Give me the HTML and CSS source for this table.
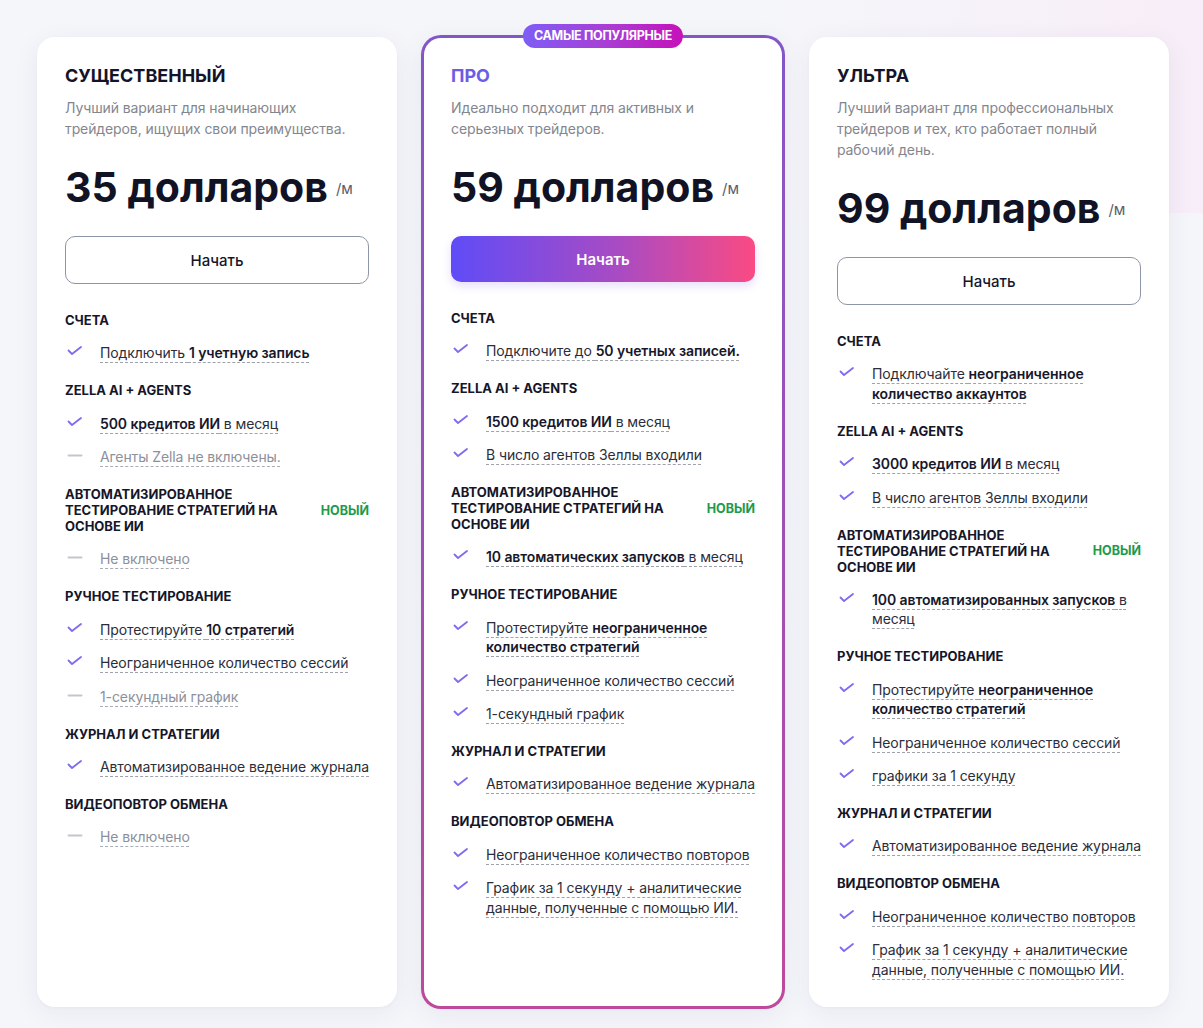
FILE: index.html
```html
<!DOCTYPE html>
<html lang="ru">
<head>
<meta charset="utf-8">
<title>Тарифы</title>
<link rel="stylesheet" href="styles.css">
</head>
<body>
<div class="pricing">

  <div class="card">
    <h3 class="plan">СУЩЕСТВЕННЫЙ</h3>
    <p class="desc">Лучший вариант для начинающих трейдеров, ищущих свои преимущества.</p>
    <div class="price"><span class="amount">35 долларов</span><span class="per">/м</span></div>
    <a class="btn btn-outline" href="#">Начать</a>
    <div class="features">
      <div class="section">
        <div class="sec-head"><span class="sec-title">СЧЕТА</span></div>
        <ul class="items">
          <li class="yes"><span class="ic"><svg viewBox="0 0 16 16"><path d="M1.5 6.5 5 10 14 3"/></svg></span><span class="txt">Подключить <b>1 учетную запись</b></span></li>
        </ul>
      </div>
      <div class="section">
        <div class="sec-head"><span class="sec-title">ZELLA AI + AGENTS</span></div>
        <ul class="items">
          <li class="yes"><span class="ic"><svg viewBox="0 0 16 16"><path d="M1.5 6.5 5 10 14 3"/></svg></span><span class="txt"><b>500 кредитов ИИ</b> в месяц</span></li>
          <li class="no"><span class="ic"><svg viewBox="0 0 16 16"><path d="M1.5 7.5H14.5"/></svg></span><span class="txt">Агенты Zella не включены.</span></li>
        </ul>
      </div>
      <div class="section">
        <div class="sec-head"><span class="sec-title wrap">АВТОМАТИЗИРОВАННОЕ ТЕСТИРОВАНИЕ СТРАТЕГИЙ НА ОСНОВЕ ИИ</span><span class="new">НОВЫЙ</span></div>
        <ul class="items">
          <li class="no"><span class="ic"><svg viewBox="0 0 16 16"><path d="M1.5 7.5H14.5"/></svg></span><span class="txt">Не включено</span></li>
        </ul>
      </div>
      <div class="section">
        <div class="sec-head"><span class="sec-title">РУЧНОЕ ТЕСТИРОВАНИЕ</span></div>
        <ul class="items">
          <li class="yes"><span class="ic"><svg viewBox="0 0 16 16"><path d="M1.5 6.5 5 10 14 3"/></svg></span><span class="txt">Протестируйте <b>10 стратегий</b></span></li>
          <li class="yes"><span class="ic"><svg viewBox="0 0 16 16"><path d="M1.5 6.5 5 10 14 3"/></svg></span><span class="txt">Неограниченное количество сессий</span></li>
          <li class="no"><span class="ic"><svg viewBox="0 0 16 16"><path d="M1.5 7.5H14.5"/></svg></span><span class="txt">1-секундный график</span></li>
        </ul>
      </div>
      <div class="section">
        <div class="sec-head"><span class="sec-title">ЖУРНАЛ И СТРАТЕГИИ</span></div>
        <ul class="items">
          <li class="yes"><span class="ic"><svg viewBox="0 0 16 16"><path d="M1.5 6.5 5 10 14 3"/></svg></span><span class="txt">Автоматизированное ведение журнала</span></li>
        </ul>
      </div>
      <div class="section">
        <div class="sec-head"><span class="sec-title">ВИДЕОПОВТОР ОБМЕНА</span></div>
        <ul class="items">
          <li class="no"><span class="ic"><svg viewBox="0 0 16 16"><path d="M1.5 7.5H14.5"/></svg></span><span class="txt">Не включено</span></li>
        </ul>
      </div>
    </div>
  </div>

  <div class="card card-pro">
    <span class="badge">САМЫЕ ПОПУЛЯРНЫЕ</span>
    <h3 class="plan plan-pro">ПРО</h3>
    <p class="desc">Идеально подходит для активных и серьезных трейдеров.</p>
    <div class="price"><span class="amount">59 долларов</span><span class="per">/м</span></div>
    <a class="btn btn-grad" href="#">Начать</a>
    <div class="features">
      <div class="section">
        <div class="sec-head"><span class="sec-title">СЧЕТА</span></div>
        <ul class="items">
          <li class="yes"><span class="ic"><svg viewBox="0 0 16 16"><path d="M1.5 6.5 5 10 14 3"/></svg></span><span class="txt">Подключите до <b>50 учетных записей.</b></span></li>
        </ul>
      </div>
      <div class="section">
        <div class="sec-head"><span class="sec-title">ZELLA AI + AGENTS</span></div>
        <ul class="items">
          <li class="yes"><span class="ic"><svg viewBox="0 0 16 16"><path d="M1.5 6.5 5 10 14 3"/></svg></span><span class="txt"><b>1500 кредитов ИИ</b> в месяц</span></li>
          <li class="yes"><span class="ic"><svg viewBox="0 0 16 16"><path d="M1.5 6.5 5 10 14 3"/></svg></span><span class="txt">В число агентов Зеллы входили</span></li>
        </ul>
      </div>
      <div class="section">
        <div class="sec-head"><span class="sec-title wrap">АВТОМАТИЗИРОВАННОЕ ТЕСТИРОВАНИЕ СТРАТЕГИЙ НА ОСНОВЕ ИИ</span><span class="new">НОВЫЙ</span></div>
        <ul class="items">
          <li class="yes"><span class="ic"><svg viewBox="0 0 16 16"><path d="M1.5 6.5 5 10 14 3"/></svg></span><span class="txt"><b>10 автоматических запусков</b> в месяц</span></li>
        </ul>
      </div>
      <div class="section">
        <div class="sec-head"><span class="sec-title">РУЧНОЕ ТЕСТИРОВАНИЕ</span></div>
        <ul class="items">
          <li class="yes"><span class="ic"><svg viewBox="0 0 16 16"><path d="M1.5 6.5 5 10 14 3"/></svg></span><span class="txt">Протестируйте <b>неограниченное количество стратегий</b></span></li>
          <li class="yes"><span class="ic"><svg viewBox="0 0 16 16"><path d="M1.5 6.5 5 10 14 3"/></svg></span><span class="txt">Неограниченное количество сессий</span></li>
          <li class="yes"><span class="ic"><svg viewBox="0 0 16 16"><path d="M1.5 6.5 5 10 14 3"/></svg></span><span class="txt">1-секундный график</span></li>
        </ul>
      </div>
      <div class="section">
        <div class="sec-head"><span class="sec-title">ЖУРНАЛ И СТРАТЕГИИ</span></div>
        <ul class="items">
          <li class="yes"><span class="ic"><svg viewBox="0 0 16 16"><path d="M1.5 6.5 5 10 14 3"/></svg></span><span class="txt">Автоматизированное ведение журнала</span></li>
        </ul>
      </div>
      <div class="section">
        <div class="sec-head"><span class="sec-title">ВИДЕОПОВТОР ОБМЕНА</span></div>
        <ul class="items">
          <li class="yes"><span class="ic"><svg viewBox="0 0 16 16"><path d="M1.5 6.5 5 10 14 3"/></svg></span><span class="txt">Неограниченное количество повторов</span></li>
          <li class="yes"><span class="ic"><svg viewBox="0 0 16 16"><path d="M1.5 6.5 5 10 14 3"/></svg></span><span class="txt">График за 1 секунду + аналитические данные, полученные с помощью ИИ.</span></li>
        </ul>
      </div>
    </div>
  </div>

  <div class="card">
    <h3 class="plan">УЛЬТРА</h3>
    <p class="desc">Лучший вариант для профессиональных трейдеров и тех, кто работает полный рабочий день.</p>
    <div class="price"><span class="amount">99 долларов</span><span class="per">/м</span></div>
    <a class="btn btn-outline" href="#">Начать</a>
    <div class="features">
      <div class="section">
        <div class="sec-head"><span class="sec-title">СЧЕТА</span></div>
        <ul class="items">
          <li class="yes"><span class="ic"><svg viewBox="0 0 16 16"><path d="M1.5 6.5 5 10 14 3"/></svg></span><span class="txt">Подключайте <b>неограниченное количество аккаунтов</b></span></li>
        </ul>
      </div>
      <div class="section">
        <div class="sec-head"><span class="sec-title">ZELLA AI + AGENTS</span></div>
        <ul class="items">
          <li class="yes"><span class="ic"><svg viewBox="0 0 16 16"><path d="M1.5 6.5 5 10 14 3"/></svg></span><span class="txt"><b>3000 кредитов ИИ</b> в месяц</span></li>
          <li class="yes"><span class="ic"><svg viewBox="0 0 16 16"><path d="M1.5 6.5 5 10 14 3"/></svg></span><span class="txt">В число агентов Зеллы входили</span></li>
        </ul>
      </div>
      <div class="section">
        <div class="sec-head"><span class="sec-title wrap">АВТОМАТИЗИРОВАННОЕ ТЕСТИРОВАНИЕ СТРАТЕГИЙ НА ОСНОВЕ ИИ</span><span class="new">НОВЫЙ</span></div>
        <ul class="items">
          <li class="yes"><span class="ic"><svg viewBox="0 0 16 16"><path d="M1.5 6.5 5 10 14 3"/></svg></span><span class="txt"><b>100 автоматизированных запусков</b> в месяц</span></li>
        </ul>
      </div>
      <div class="section">
        <div class="sec-head"><span class="sec-title">РУЧНОЕ ТЕСТИРОВАНИЕ</span></div>
        <ul class="items">
          <li class="yes"><span class="ic"><svg viewBox="0 0 16 16"><path d="M1.5 6.5 5 10 14 3"/></svg></span><span class="txt">Протестируйте <b>неограниченное количество стратегий</b></span></li>
          <li class="yes"><span class="ic"><svg viewBox="0 0 16 16"><path d="M1.5 6.5 5 10 14 3"/></svg></span><span class="txt">Неограниченное количество сессий</span></li>
          <li class="yes"><span class="ic"><svg viewBox="0 0 16 16"><path d="M1.5 6.5 5 10 14 3"/></svg></span><span class="txt">графики за 1 секунду</span></li>
        </ul>
      </div>
      <div class="section">
        <div class="sec-head"><span class="sec-title">ЖУРНАЛ И СТРАТЕГИИ</span></div>
        <ul class="items">
          <li class="yes"><span class="ic"><svg viewBox="0 0 16 16"><path d="M1.5 6.5 5 10 14 3"/></svg></span><span class="txt">Автоматизированное ведение журнала</span></li>
        </ul>
      </div>
      <div class="section">
        <div class="sec-head"><span class="sec-title">ВИДЕОПОВТОР ОБМЕНА</span></div>
        <ul class="items">
          <li class="yes"><span class="ic"><svg viewBox="0 0 16 16"><path d="M1.5 6.5 5 10 14 3"/></svg></span><span class="txt">Неограниченное количество повторов</span></li>
          <li class="yes"><span class="ic"><svg viewBox="0 0 16 16"><path d="M1.5 6.5 5 10 14 3"/></svg></span><span class="txt">График за 1 секунду + аналитические данные, полученные с помощью ИИ.</span></li>
        </ul>
      </div>
    </div>
  </div>

</div>
</body>
</html>
```

FILE: styles.css
```css
* { box-sizing: border-box; }

html, body { margin: 0; padding: 0; }

body {
  font-family: Inter, "Noto Sans", "DejaVu Sans", sans-serif;
  color: #16172a;
  background:
    linear-gradient(90deg, rgba(248, 236, 248, 0) 0%, rgba(248, 236, 248, 0.9) 100%) right top / 420px 213px no-repeat,
    #f5f6fa;
  min-height: 1028px;
}

.pricing {
  display: flex;
  align-items: stretch;
  gap: 24px;
  padding: 37px 0 21px 37px;
}

.card {
  position: relative;
  width: 360px;
  flex: 0 0 360px;
  background: #fff;
  border-radius: 18px;
  padding: 28px;
  box-shadow: 0 6px 28px rgba(30, 32, 80, 0.06), 0 1px 3px rgba(30, 32, 80, 0.03);
  display: flex;
  flex-direction: column;
}

.card-pro {
  width: 364px;
  flex: 0 0 364px;
  margin: -2px 0;
  padding: 27px;
  border: 3px solid transparent;
  border-radius: 20px;
  background:
    linear-gradient(#fff, #fff) padding-box,
    linear-gradient(180deg, #8356c8 0%, #a050b2 55%, #bd4a9b 100%) border-box;
}

.badge {
  position: absolute;
  top: -14px;
  left: 50%;
  transform: translateX(-50%);
  height: 24px;
  line-height: 24px;
  padding: 0 11px;
  border-radius: 12px;
  font-size: 12.5px;
  font-weight: 700;
  letter-spacing: -0.3px;
  color: #fff;
  white-space: nowrap;
  background: linear-gradient(90deg, #7e5df6 0%, #a83fd6 50%, #c512b9 100%);
}

.plan {
  margin: 0 0 10px;
  font-size: 18px;
  line-height: 22px;
  font-weight: 700;
  color: #13142a;
}

.plan-pro { color: #6c5ce7; }

.desc {
  margin: 0;
  font-size: 14px;
  line-height: 21px;
  letter-spacing: -0.1px;
  color: #84868e;
}

.price {
  display: flex;
  align-items: center;
  height: 48px;
  margin: 24px 0 25px;
}

.amount {
  font-size: 41px;
  font-weight: 700;
  color: #111325;
  line-height: 48px;
}

.per {
  margin-left: 8px;
  font-size: 15px;
  color: #5b5e69;
  position: relative;
  top: 1px;
}

.btn {
  display: flex;
  align-items: center;
  justify-content: center;
  text-decoration: none;
  border-radius: 10px;
  font-size: 15px;
  font-weight: 500;
}

.btn-outline {
  height: 48px;
  border: 1px solid #8d96a6;
  color: #15162a;
  background: #fff;
}

.btn-grad {
  height: 46px;
  color: #fff;
  font-weight: 600;
  background: linear-gradient(90deg, #5f4cf7 0%, #a94bc3 55%, #fa4a83 100%);
  box-shadow: 0 4px 10px rgba(120, 70, 220, 0.18);
}

.features {
  margin-top: 28px;
  display: flex;
  flex-direction: column;
  gap: 19.5px;
}

.sec-head {
  display: flex;
  align-items: center;
  justify-content: space-between;
  margin-bottom: 15.25px;
}

.sec-title {
  font-size: 13px;
  line-height: 16px;
  font-weight: 700;
  color: #15162a;
}

.sec-title.wrap { max-width: 232px; }

.new {
  font-size: 12.5px;
  font-weight: 700;
  color: #1d9a4b;
}

.items {
  list-style: none;
  margin: 0 -4px 0 0;
  padding: 0;
  display: flex;
  flex-direction: column;
  gap: 14px;
}

.items li {
  display: flex;
  align-items: flex-start;
  gap: 15px;
  font-size: 14px;
  line-height: 19.5px;
  letter-spacing: -0.1px;
  color: #2b2d3b;
}

.ic {
  flex: 0 0 20px;
  height: 19.5px;
  padding: 1px 0 0 2px;
}

.ic svg {
  display: block;
  width: 16px;
  height: 16px;
  fill: none;
  stroke-linecap: round;
  stroke-linejoin: round;
}

.yes .ic svg { stroke: #7c6cf0; stroke-width: 1.8; }
.no .ic svg { stroke: #c3c6ce; stroke-width: 2; }

.txt {
  text-decoration-line: underline;
  text-decoration-style: dashed;
  text-decoration-color: #9ea2ab;
  text-decoration-thickness: 1px;
  text-underline-offset: 4px;
}

.txt b {
  font-weight: 600;
  color: #17182b;
}

.no { color: #8c909a; }
.no .txt { color: #8c909a; text-decoration-color: #a8acb4; }
```
